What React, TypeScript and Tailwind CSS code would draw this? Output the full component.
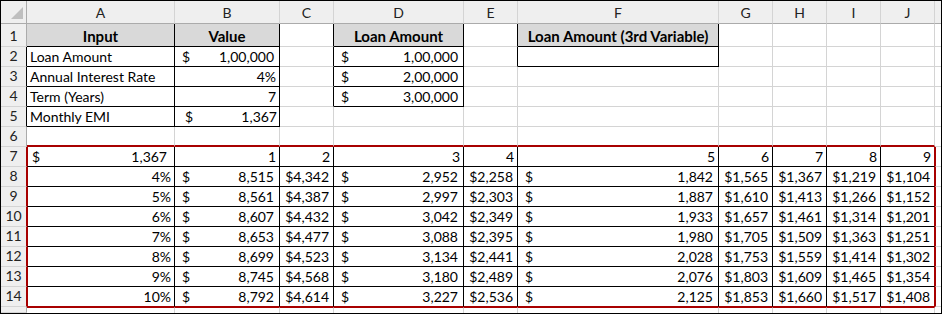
const COLW = [
  "w-[26px]",
  "w-[148px]",
  "w-[105px]",
  "w-[54px]",
  "w-[130px]",
  "w-[54px]",
  "w-[201px]",
  "w-[54px]",
  "w-[54px]",
  "w-[54px]",
  "w-[54px]",
];
const LETTERS = ["A", "B", "C", "D", "E", "F", "G", "H", "I", "J"];

const TABLE: string[][] = [
  ["4%", "8,515", "$4,342", "2,952", "$2,258", "1,842", "$1,565", "$1,367", "$1,219", "$1,104"],
  ["5%", "8,561", "$4,387", "2,997", "$2,303", "1,887", "$1,610", "$1,413", "$1,266", "$1,152"],
  ["6%", "8,607", "$4,432", "3,042", "$2,349", "1,933", "$1,657", "$1,461", "$1,314", "$1,201"],
  ["7%", "8,653", "$4,477", "3,088", "$2,395", "1,980", "$1,705", "$1,509", "$1,363", "$1,251"],
  ["8%", "8,699", "$4,523", "3,134", "$2,441", "2,028", "$1,753", "$1,559", "$1,414", "$1,302"],
  ["9%", "8,745", "$4,568", "3,180", "$2,489", "2,076", "$1,803", "$1,609", "$1,465", "$1,354"],
  ["10%", "8,792", "$4,614", "3,227", "$2,536", "2,125", "$1,853", "$1,660", "$1,517", "$1,408"],
];

// kind:value  h=header, l=left text, r=right, c=currency, a=accounting
const SHEET: string[][] = [
  ["h:Input", "h:Value", "", "h:Loan Amount", "", "h:Loan Amount (3rd Variable)", "", "", "", ""],
  ["l:Loan Amount", "a:1,00,000", "", "a:1,00,000", "", "", "", "", "", ""],
  ["l:Annual Interest Rate", "r:4%", "", "a:2,00,000", "", "", "", "", "", ""],
  ["l:Term (Years)", "r:7", "", "a:3,00,000", "", "", "", "", "", ""],
  ["l:Monthly EMI", "b:1,367", "", "", "", "", "", "", "", ""],
  ["", "", "", "", "", "", "", "", "", ""],
  ["x:1,367", "r:1", "r:2", "r:3", "r:4", "r:5", "r:6", "r:7", "r:8", "r:9"],
  ...TABLE.map((row) =>
    row.map((v, i) => (i === 0 ? "r:" + v : i === 1 || i === 3 || i === 5 ? "a:" + v : "c:" + v)),
  ),
  ["", "", "", "", "", "", "", "", "", ""],
];

function boxed(r: number, c: number) {
  if (r >= 1 && r <= 5 && c >= 1 && c <= 2) return true;
  if (r >= 1 && r <= 4 && c === 4) return true;
  if (r >= 1 && r <= 2 && c === 6) return true;
  if (r >= 7 && r <= 14 && c >= 1 && c <= 10) return true;
  return false;
}

const inRed = (r: number) => r >= 7 && r <= 14;

function cellBorders(r: number, c: number) {
  const cls: string[] = [];
  if (c === 10 && inRed(r)) cls.push("border-r border-r-[#a80000]");
  else if (c === 11) cls.push("");
  else if (boxed(r, c) || boxed(r, c + 1)) cls.push("border-r border-r-black");
  else cls.push("border-r border-r-[#d4d4d4]");

  if (r === 6 && c >= 1 && c <= 10) cls.push("border-b-2 border-b-[#a80000]");
  else if (r === 14 && c >= 1 && c <= 10) cls.push("border-b border-b-[#a80000]");
  else if (r === 15) cls.push("");
  else if (boxed(r, c) || boxed(r + 1, c)) cls.push("border-b border-b-black");
  else cls.push("border-b border-b-[#d4d4d4]");

  if (inRed(r) && (c === 1 || c === 11)) cls.push("border-l border-l-[#a80000]");
  if (r === 15 && c >= 1 && c <= 10) cls.push("border-t border-t-[#a80000]");
  return cls.join(" ");
}

function Content({ v }: { v: string }) {
  if (!v) return null;
  const k = v[0];
  const s = v.slice(2);
  if (k === "h") return <span className="w-full text-center font-bold text-[15px] whitespace-nowrap">{s}</span>;
  if (k === "l") return <span className="pl-[3px] whitespace-nowrap">{s}</span>;
  if (k === "r") return <span className="ml-auto pr-[3px]">{s}</span>;
  if (k === "c") return <span className="ml-auto pr-[4px]">{s}</span>;
  if (k === "b")
    return (
      <>
        <span className="pl-[10px]">$</span>
        <span className="ml-auto pr-[2px]">{s}</span>
      </>
    );
  if (k === "x")
    return (
      <>
        <span className="pl-[4px]">$</span>
        <span className="ml-auto pr-[7px]">{s}</span>
      </>
    );
  return (
    <>
      <span className="pl-[7px]">$</span>
      <span className="ml-auto pr-[5px]">{s}</span>
    </>
  );
}

function RowHead({ r }: { r: number }) {
  const right = r >= 2 && r <= 5 ? "border-r-black" : inRed(r) ? "border-r-[#a80000]" : "border-r-[#ababab]";
  return (
    <div
      className={`${COLW[0]} shrink-0 flex items-end justify-center pb-[2px] bg-[#efefef] text-[#222] border-r border-b border-b-[#d4d4d4] ${right}`}
    >
      {r <= 14 ? r : ""}
    </div>
  );
}

export default function App() {
  return (
    <div className="w-[942px] h-[314px] flex flex-col border border-black bg-white overflow-hidden font-['Lato',sans-serif] text-[14px] leading-[17px] text-black">
      {/* column letters */}
      <div className="flex h-[23px] shrink-0 bg-[#efefef] text-[#222]">
        <div className={`${COLW[0]} shrink-0 flex items-end justify-end pr-[3px] pb-[4px] border-r border-b border-[#ababab]`}>
          <svg width="12" height="12" viewBox="0 0 12 12">
            <path d="M12 0 L12 12 L0 12 Z" fill="#bfbfbf" />
          </svg>
        </div>
        {LETTERS.map((l, i) => (
          <div
            key={l}
            className={`${COLW[i + 1]} shrink-0 flex items-end justify-center pb-[2px] border-r border-r-[#d4d4d4] border-b border-b-[#ababab]`}
          >
            {l}
          </div>
        ))}
        <div className="flex-1 border-b border-b-[#ababab]" />
      </div>

      {SHEET.map((row, ri) => {
        const r = ri + 1;
        return (
          <div key={r} className={`flex shrink-0 ${r === 1 ? "h-[23px]" : r === 15 ? "flex-1" : "h-[20px]"}`}>
            <RowHead r={r} />
            {row.map((v, ci) => (
              <div
                key={ci}
                className={`${COLW[ci + 1]} shrink-0 flex items-end pb-[1px] ${
                  v.startsWith("h:") ? "bg-[#d9d9d9]" : ""
                } ${cellBorders(r, ci + 1)}`}
              >
                <Content v={v} />
              </div>
            ))}
            <div className={`flex-1 ${cellBorders(r, 11)}`} />
          </div>
        );
      })}
    </div>
  );
}
